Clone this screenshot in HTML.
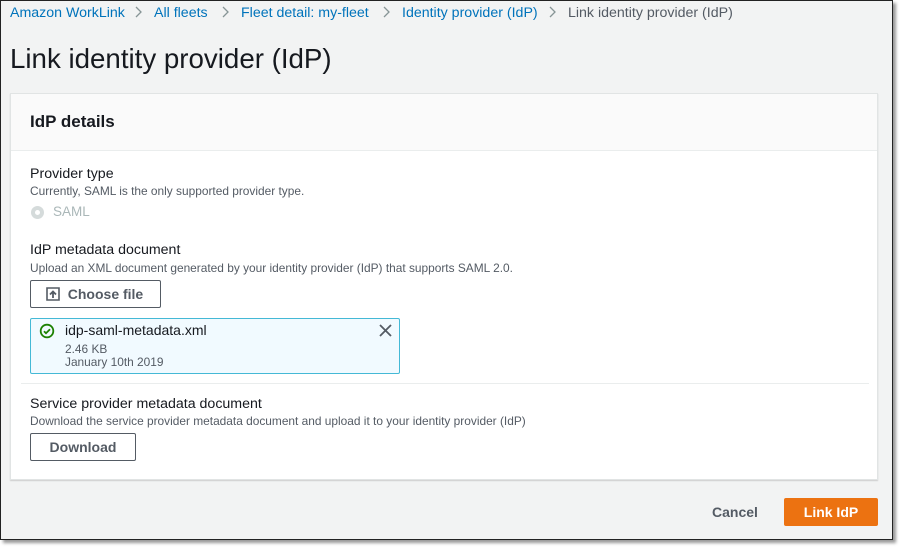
<!DOCTYPE html>
<html><head><style>
*{box-sizing:border-box;margin:0;padding:0}
body{width:900px;height:549px;background:#fff;font-family:"Liberation Sans",sans-serif;position:relative;overflow:hidden}
.frame{position:absolute;left:0;top:0;width:893px;height:540px;background:#f2f3f3;border:1.5px solid #222;box-shadow:3px 3px 3px #999}
.a{position:absolute;white-space:nowrap}
.bc{top:4px;font-size:14.2px;color:#0073bb}
.card{position:absolute;left:9px;top:92px;width:868px;height:387px;background:#fff;border:1px solid #e1e4e4;box-shadow:0 1px 1px #ccc}
.hd{height:57px;background:#fafafa;border-bottom:1px solid #eaeded}
.lbl{font-size:14.2px;color:#16191f}
.desc{font-size:11.9px;color:#545b64}
.btn{position:absolute;border:1px solid #545b64;border-radius:2px;background:#fff;font-weight:bold;font-size:14px;color:#545b64;text-align:center}
</style></head><body>
<div class="frame">
<div class="a bc" style="left:9px">Amazon WorkLink</div>
<div class="a bc" style="left:153px">All fleets</div>
<div class="a bc" style="left:240px">Fleet detail: my-fleet</div>
<div class="a bc" style="left:401px">Identity provider (IdP)</div>
<div class="a bc" style="left:567px;color:#545b64">Link identity provider (IdP)</div>
<svg class="a" style="left:0;top:0" width="900" height="30"><g fill="none" stroke="#879596" stroke-width="1.3"><path d="M135 6l5 5-5 5M222 6l5 5-5 5M383 6l5 5-5 5M549 6l5 5-5 5"/></g></svg>
<div class="a" style="left:9px;top:42px;font-size:27.7px;color:#16191f">Link identity provider (IdP)</div>
<div class="card">
<div class="hd"></div>
<div class="a" style="left:19px;top:18px;font-size:17px;font-weight:bold;color:#16191f">IdP details</div>
<div class="a lbl" style="left:19px;top:72px">Provider type</div>
<div class="a desc" style="left:19px;top:90px">Currently, SAML is the only supported provider type.</div>
<div class="a" style="left:20px;top:112px;width:13px;height:13px;border-radius:50%;border:4px solid #d5dbdb;background:#fff"></div>
<div class="a" style="left:42px;top:110px;font-size:13.5px;color:#aab7b8">SAML</div>
<div class="a lbl" style="left:19px;top:148px">IdP metadata document</div>
<div class="a desc" style="left:19px;top:167px">Upload an XML document generated by your identity provider (IdP) that supports SAML 2.0.</div>
<div class="btn" style="left:19px;top:186px;width:131px;height:28px;line-height:26px;padding-left:20px">Choose file</div>
<svg class="a" style="left:34px;top:192px" width="16" height="16" viewBox="0 0 16 16"><path d="M2 4V2h12v12H2V4" fill="none" stroke="#545b64" stroke-width="1.6"/><path d="M8 12V6M5 8.5L8 5.5l3 3" fill="none" stroke="#545b64" stroke-width="1.8"/></svg>
<div class="a" style="left:19px;top:224px;width:370px;height:56px;background:#f1faff;border:1px solid #44b9d6;border-radius:2px"></div>
<svg class="a" style="left:28px;top:229px" width="16" height="16" viewBox="0 0 16 16"><circle cx="8" cy="8" r="6.3" fill="none" stroke="#1d8102" stroke-width="1.8"/><path d="M5 8.2l2 2 4-4" fill="none" stroke="#1d8102" stroke-width="1.8"/></svg>
<div class="a" style="left:54px;top:228px;font-size:14px;color:#16191f">idp-saml-metadata.xml</div>
<div class="a desc" style="left:54px;top:248px">2.46 KB</div>
<div class="a desc" style="left:54px;top:261px">January 10th 2019</div>
<svg class="a" style="left:368px;top:230px" width="13" height="13" viewBox="0 0 13 13"><path d="M1 1l11 11M12 1L1 12" stroke="#545b64" stroke-width="1.8"/></svg>
<div class="a" style="left:10px;top:289px;width:848px;height:1px;background:#eaeded"></div>
<div class="a lbl" style="left:19px;top:302px">Service provider metadata document</div>
<div class="a desc" style="left:19px;top:320px">Download the service provider metadata document and upload it to your identity provider (IdP)</div>
<div class="btn" style="left:19px;top:339px;width:106px;height:28px;line-height:26px">Download</div>
</div>
<div class="a" style="left:711px;top:503px;font-size:14px;font-weight:bold;color:#545b64">Cancel</div>
<div class="a" style="left:783px;top:497px;width:94px;height:28px;background:#ec7211;border-radius:2px;color:#fff;font-weight:bold;font-size:14px;text-align:center;line-height:28px">Link IdP</div>
</div>
</body></html>
